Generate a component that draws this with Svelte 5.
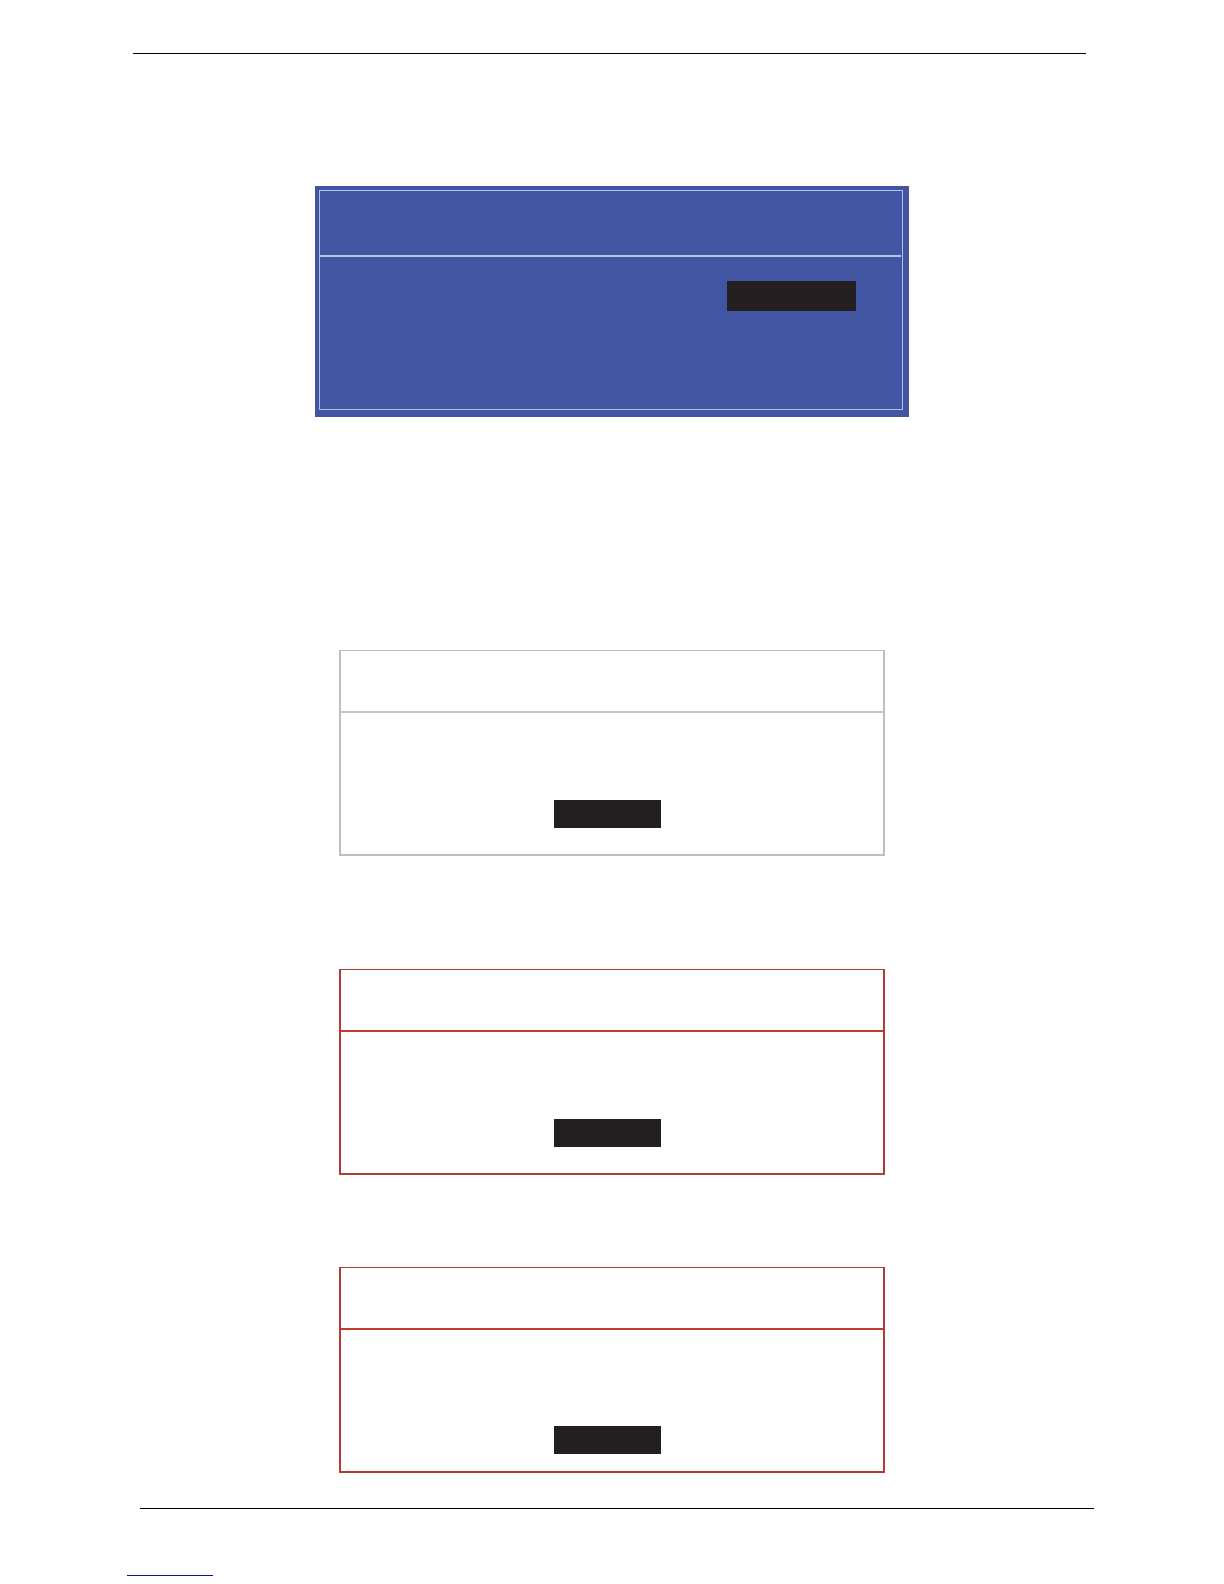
<script>
  const dialogs = [
    { tone: 'notice', label: 'Continue' },
    { tone: 'warning', label: 'Continue after warning' },
    { tone: 'warning low', label: 'Continue after error' }
  ];
</script>

<div class="page">
  <header></header>

  <main>
    <form class="setup">
      <div class="frame">
        <div class="title"></div>
        <div class="fields">
          <input type="password" aria-label="New password" />
        </div>
      </div>
    </form>

    {#each dialogs as dialog}
      <section class="dialog {dialog.tone}">
        <div class="title"></div>
        <div class="body">
          <button type="button" aria-label={dialog.label}></button>
        </div>
      </section>
    {/each}
  </main>

  <footer>
    <a href="#top" aria-label="Back to top"></a>
  </footer>
</div>

<style>
  :global(body) {
    margin: 0;
    background: #fff;
    font-family: 'Liberation Sans', sans-serif;
  }

  .page,
  .page * {
    box-sizing: border-box;
  }

  .page {
    padding: 53px 0 8px;
  }

  header {
    margin: 0 138px 0 133px;
    border-top: 1px solid #000;
  }

  main {
    display: flex;
    flex-direction: column;
    align-items: center;
    padding: 132px 0 35px;
  }

  .setup {
    width: 100%;
    max-width: 594px;
    margin: 0 0 233px;
    padding: 4px 6px 7px 4px;
    background: #4255a2;
  }

  .frame {
    padding-right: 1px;
    border: 1px solid #b0c0e8;
  }

  .setup .title {
    height: 66px;
    border-bottom: 2px solid #b4c4ea;
  }

  .fields {
    display: flex;
    justify-content: flex-end;
    padding: 24px 45px 98px;
  }

  input,
  button {
    display: block;
    margin: 0;
    padding: 0;
    border: 0;
    border-radius: 0;
    background: #231f20;
    color: #fff;
  }

  input {
    width: 129px;
    height: 30px;
  }

  button {
    width: 107px;
    height: 28px;
  }

  .dialog {
    width: 100%;
    max-width: 546px;
    border: 2px solid #bfbfbf;
    border-top-width: 1px;
  }

  .dialog .title {
    height: 62px;
    border-bottom: 2px solid #c5c5c5;
  }

  .body {
    display: flex;
    justify-content: center;
    padding: 87px 9px 26px 0;
  }

  .notice {
    margin-bottom: 113px;
  }

  .warning {
    margin-bottom: 92px;
    border-color: #b03c37;
  }

  .warning .title {
    border-bottom-color: #c43a2c;
  }

  .low {
    margin-bottom: 0;
  }

  .low .body {
    padding-top: 96px;
    padding-bottom: 17px;
  }

  footer {
    padding: 0 130px 0 127px;
  }

  footer::before {
    content: '';
    display: block;
    margin: 0 0 66px 13px;
    border-top: 1px solid #000;
  }

  footer a {
    display: block;
    width: 86px;
    border-bottom: 1px solid #0a1890;
  }
</style>
